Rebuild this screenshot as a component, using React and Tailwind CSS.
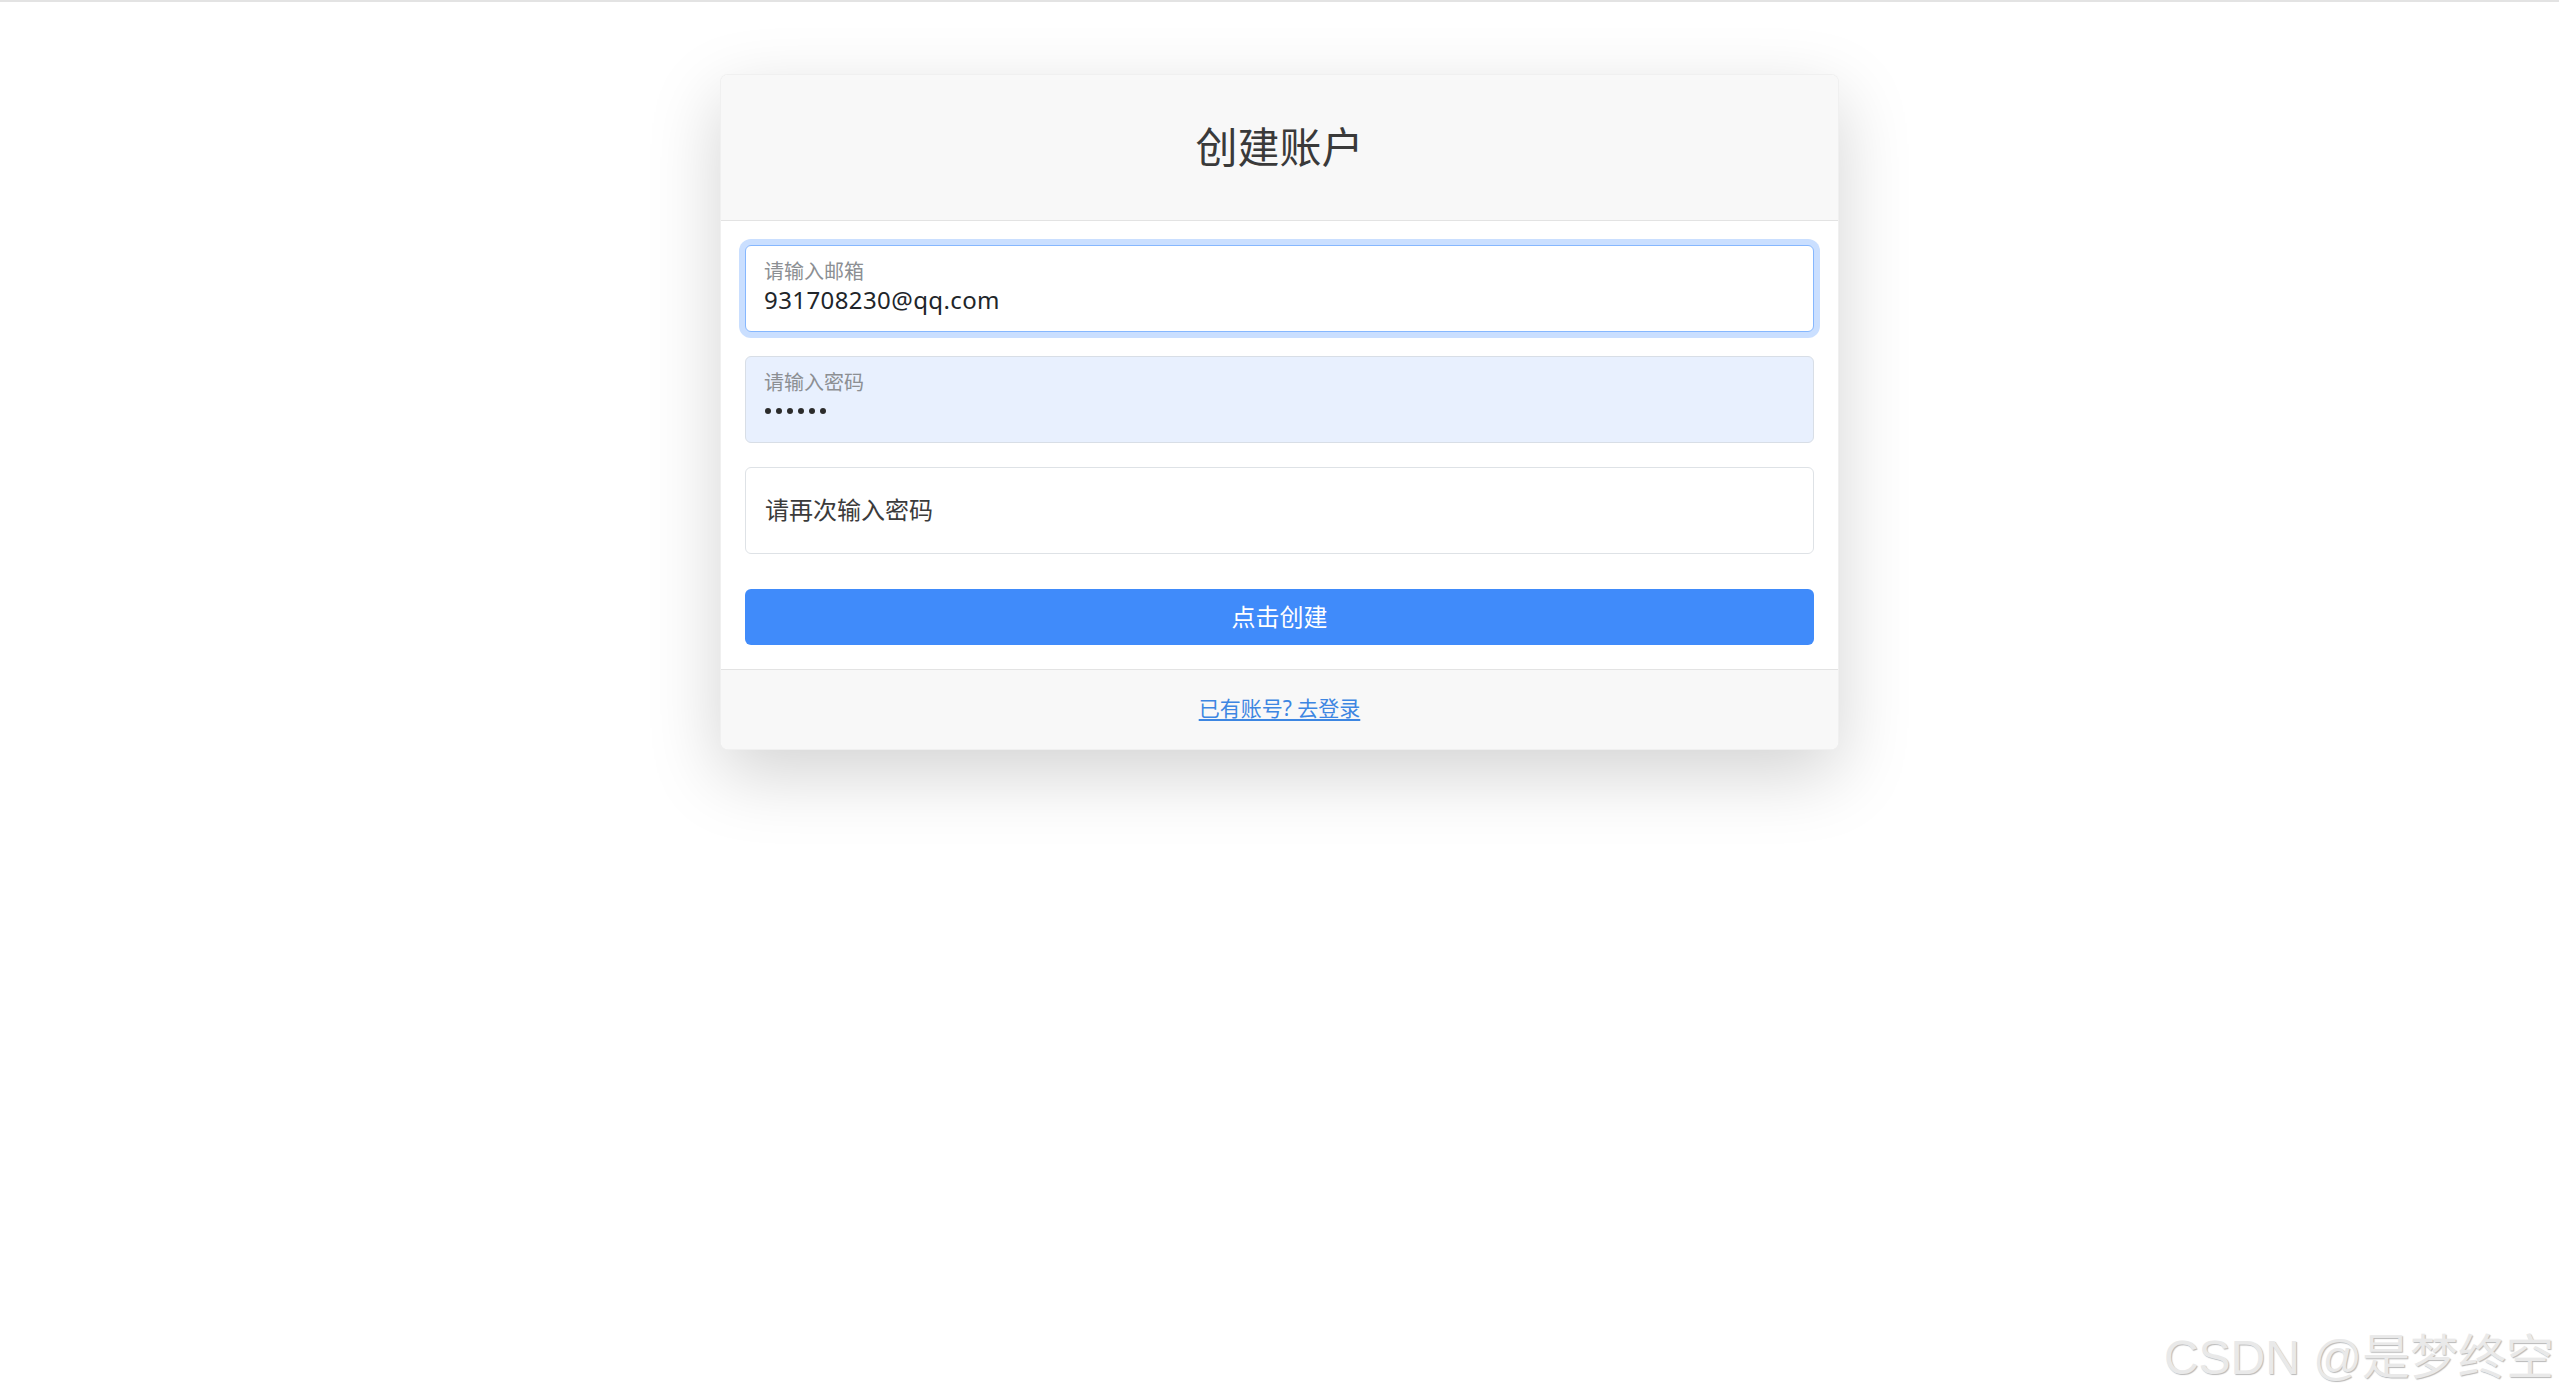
export default function App() {
  const font = { fontFamily: '"Noto Sans", "Noto Sans CJK SC", sans-serif' };
  return (
    <div className="relative min-h-screen bg-white" style={font}>
      <div className="h-[2px] bg-[#e3e3e3]" />
      <div className="pt-[72px]">
        <div className="mx-auto w-[1119px] overflow-hidden rounded-[8px] border border-black/[0.06] bg-white shadow-[0_24px_72px_rgba(0,0,0,0.175)]">
          <div className="flex h-[146px] items-center justify-center border-b border-[#e3e3e3] bg-[#f8f8f8]">
            <h3 className="text-[42px] leading-[1.2] font-normal text-[#3a3a3a]">创建账户</h3>
          </div>
          <div className="flex flex-col px-6 pt-6 pb-6">
            <div className="flex h-[87px] flex-col rounded-[6px] border border-[#86b7fe] bg-white pl-[18px] pt-[14px] shadow-[0_0_0_6px_rgba(13,110,253,0.22)]">
              <div className="text-[20px] leading-[24px] text-[#8c8f93]">请输入邮箱</div>
              <div className="mt-[1px] text-[24px] leading-[30px] tracking-[0.4px] text-[#212529]">931708230@qq.com</div>
            </div>
            <div className="mt-6 flex h-[87px] flex-col rounded-[6px] border border-[#d8dee6] bg-[#e8f0fe] pl-[18px] pt-[14px]">
              <div className="text-[20px] leading-[24px] text-[#8c8f93]">请输入密码</div>
              <div className="mt-[1px] flex h-[30px] items-center gap-[5px] pl-[1px]">
                {[0, 1, 2, 3, 4, 5].map((i) => (
                  <span key={i} className="block h-[6px] w-[6px] rounded-full bg-[#2b2b2b]" />
                ))}
              </div>
            </div>
            <div className="mt-6 flex h-[87px] items-center rounded-[6px] border border-[#dee2e6] bg-white pl-[19px]">
              <span className="-mt-[2px] text-[24px] leading-[30px] text-[#3b3b3b]">请再次输入密码</span>
            </div>
            <button className="mt-[35px] flex h-[56px] items-center justify-center rounded-[6px] bg-[#408bfa] text-[24px] leading-[36px] text-white">
              点击创建
            </button>
          </div>
          <div className="flex h-[80px] items-center justify-center border-t border-[#e3e3e3] bg-[#f8f8f8]">
            <a className="-mt-[2px] text-[21px] leading-[31px] text-[#3d86e2] underline underline-offset-[3px]" href="#">
              已有账号? 去登录
            </a>
          </div>
        </div>
      </div>
      <div
        className="absolute right-[5px] bottom-[17px] text-[48px] leading-none text-[#e9e9e9] [text-shadow:1px_1px_1px_rgba(0,0,0,0.28)]"
        style={{ fontFamily: '"Liberation Sans", "Noto Sans CJK SC", sans-serif' }}
      >
        CSDN @是梦终空
      </div>
    </div>
  );
}
